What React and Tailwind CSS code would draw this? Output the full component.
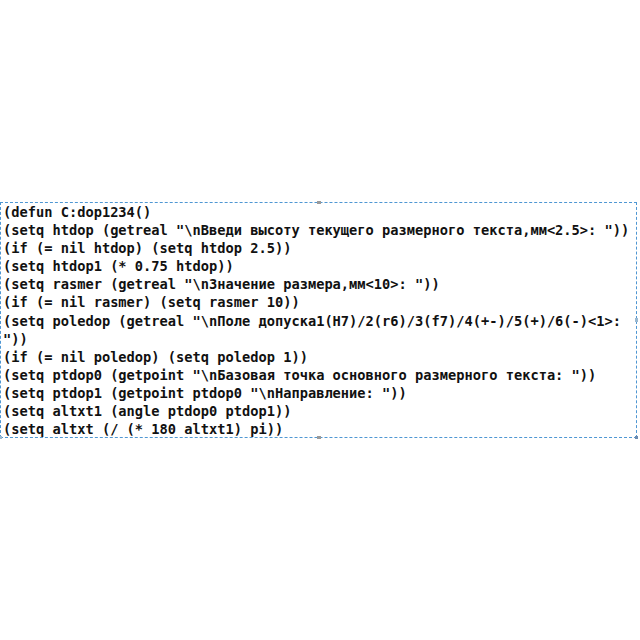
export default function App() {
  const lines = [
    '(defun C:dop1234()',
    '(setq htdop (getreal "\\nВведи высоту текущего размерного текста,мм<2.5>: "))',
    '(if (= nil htdop) (setq htdop 2.5))',
    '(setq htdop1 (* 0.75 htdop))',
    '(setq rasmer (getreal "\\nЗначение размера,мм<10>: "))',
    '(if (= nil rasmer) (setq rasmer 10))',
    '(setq poledop (getreal "\\nПоле допуска1(H7)/2(r6)/3(f7)/4(+-)/5(+)/6(-)<1>: ',
    '"))',
    '(if (= nil poledop) (setq poledop 1))',
    '(setq ptdop0 (getpoint "\\nБазовая точка основного размерного текста: "))',
    '(setq ptdop1 (getpoint ptdop0 "\\nНаправление: "))',
    '(setq altxt1 (angle ptdop0 ptdop1))',
    '(setq altxt (/ (* 180 altxt1) pi))',
  ];
  return (
    <div className="w-[640px] h-[640px] bg-white flex flex-col">
      <div className="h-[202px] shrink-0" />
      <div className="relative w-[637px] h-[236px] border border-dashed border-[#4f97d3] bg-white">
        <div className="pl-[2px] text-[13.7px] leading-[18.1px] font-bold text-[#111] whitespace-pre" style={{ fontFamily: '"DejaVu Sans Mono", monospace' }}>
          {lines.map((l, i) => (
            <div key={i}>{l}</div>
          ))}
        </div>
        <div className="absolute left-[316px] top-[-2px] w-[4px] h-[3px] bg-[#9a9a9a]" />
        <div className="absolute left-[316px] bottom-[-2px] w-[4px] h-[3px] bg-[#9a9a9a]" />
        <div className="absolute right-[-2px] top-[115px] w-[3px] h-[4px] bg-[#9ab8d0]" />
        <div className="absolute left-[-2px] bottom-[-2px] w-[3px] h-[3px] bg-[#9ab8d0]" />
        <div className="absolute right-[-2px] bottom-[-2px] w-[3px] h-[3px] bg-[#6a8ab0]" />
      </div>
    </div>
  );
}
